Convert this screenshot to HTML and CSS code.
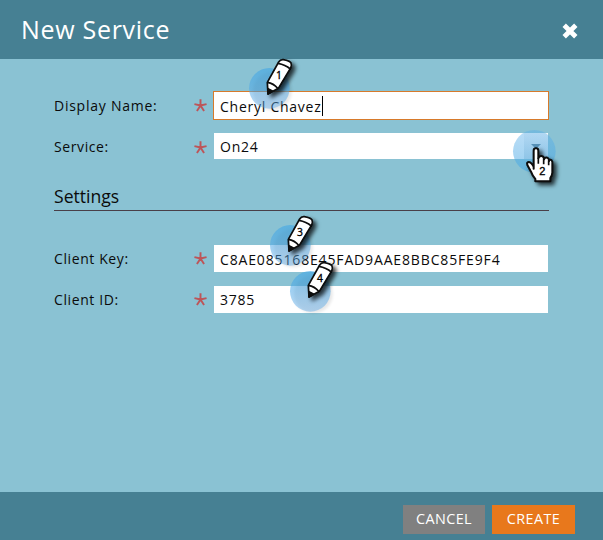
FILE: index.html
```html
<!DOCTYPE html>
<html lang="en">
<head>
<meta charset="utf-8">
<title>New Service</title>
<link rel="stylesheet" href="styles.css">
</head>
<body>
<svg class="defs" width="0" height="0">
  <defs>
    <linearGradient id="halo" x1="0" y1="0" x2="0" y2="1">
      <stop offset="0" stop-color="#45a8e4" stop-opacity=".65"/>
      <stop offset="1" stop-color="#5aa8e8" stop-opacity=".42"/>
    </linearGradient>
    <linearGradient id="halo-soft" x1="0" y1="0" x2="0" y2="1">
      <stop offset="0" stop-color="#5aaeea" stop-opacity=".42"/>
      <stop offset="1" stop-color="#45a8e4" stop-opacity=".55"/>
    </linearGradient>
    <filter id="shadow" x="-40%" y="-40%" width="200%" height="200%">
      <feDropShadow dx="10" dy="9" stdDeviation="6" flood-color="#000" flood-opacity=".75"/>
    </filter>
    <g id="pencil">
      <circle class="halo-shade" cx="97" cy="123" r="58"/>
      <circle cx="88" cy="115" r="61" fill="url(#halo)"/>
      <g filter="url(#shadow)" stroke="#0a0a0a" stroke-width="5" stroke-linejoin="round">
        <path d="M84 132 L82 97 L116 36 Q121 28 130 29 Q149 32 153 39 Q156 45 152 54 L115 115 Z" fill="#fff"/>
        <path d="M82 97 Q101 100 113 115 M114 40 Q136 44 151 57" fill="none"/>
        <path d="M84 116 L97 123 L84 132 Z" fill="#0a0a0a"/>
      </g>
    </g>
  </defs>
</svg>
<div class="dialog">
  <header class="header">
    <h1 class="title">New Service</h1>
    <svg class="close" width="18" height="18" viewBox="0 0 18 18"><path d="M3.2 3.2 L14.8 14.8 M14.8 3.2 L3.2 14.8"/></svg>
  </header>
  <main class="body">
    <div class="row row-name"><span class="label">Display Name:</span><span class="star"><svg width="13" height="13" viewBox="0 0 12 12"><path d="M6 6V.3M6 6L.4 4.7M6 6L11.6 4.7M6 6L2.7 11M6 6L9.3 11"/></svg></span><div class="field focused"><span class="value">Cheryl Chavez</span><i class="caret"></i></div></div>
    <div class="row row-service"><span class="label">Service:</span><span class="star"><svg width="13" height="13" viewBox="0 0 12 12"><path d="M6 6V.3M6 6L.4 4.7M6 6L11.6 4.7M6 6L2.7 11M6 6L9.3 11"/></svg></span><div class="field"><span class="value">On24</span><span class="trigger"><i class="arrow"></i></span></div></div>
    <h2 class="section">Settings</h2>
    <div class="row row-key"><span class="label">Client Key:</span><span class="star"><svg width="13" height="13" viewBox="0 0 12 12"><path d="M6 6V.3M6 6L.4 4.7M6 6L11.6 4.7M6 6L2.7 11M6 6L9.3 11"/></svg></span><div class="field"><span class="value key">C8AE085168E45FAD9AAE8BBC85FE9F4</span></div></div>
    <div class="row row-id"><span class="label">Client ID:</span><span class="star"><svg width="13" height="13" viewBox="0 0 12 12"><path d="M6 6V.3M6 6L.4 4.7M6 6L11.6 4.7M6 6L2.7 11M6 6L9.3 11"/></svg></span><div class="field"><span class="value">3785</span></div></div>
  </main>
  <footer class="footer">
    <button class="btn cancel"><span>CANCEL</span></button>
    <button class="btn create"><span>CREATE</span></button>
  </footer>

  <svg class="marker m1" viewBox="0 0 240 240"><use href="#pencil"/><text x="117" y="88">1</text></svg>
  <svg class="marker m2" viewBox="0 0 240 240">
    <circle cx="103" cy="124" r="64" fill="url(#halo-soft)"/>
    <g filter="url(#shadow)">
      <path d="M101 176 V122 Q101 115 108 115 Q115 115 115 122 V145 Q117 137 125 138 Q132 139 132 148 Q135 141 142 143 Q147 145 147 153 Q150 147 155 151 Q158 154 157 163 V188 Q156 199 151 204 V214 H106 V207 Q98 199 93 185 L82 165 Q79 157 86 156 Q93 156 101 170 Z" fill="#fff" stroke="#0a0a0a" stroke-width="6" stroke-linejoin="round"/>
      <path d="M115 143 V161 M131 147 V163 M146 152 V166" fill="none" stroke="#0a0a0a" stroke-width="5"/>
    </g>
    <text class="big" x="127" y="196">2</text>
  </svg>
  <svg class="marker m3" viewBox="0 0 240 240"><use href="#pencil"/><text x="117" y="88">3</text></svg>
  <svg class="marker m4" viewBox="0 0 240 240"><use href="#pencil"/><text x="117" y="88">4</text></svg>
</div>
</body>
</html>
```
FILE: styles.css
```css
* { box-sizing: border-box; }
body { margin: 0; font-family: "Open Sans", sans-serif; font-size: 14px; color: #0b0b0b; }
.defs { position: absolute; }
.dialog { position: relative; width: 603px; height: 540px; display: flex; flex-direction: column; overflow: hidden; background: #8ac2d3; }
.header { height: 59px; flex: none; display: flex; align-items: center; justify-content: space-between; padding: 0 24px 0 21px; background: #468093; }
.title { margin: -1px 0 0; font-size: 25px; line-height: 32px; font-weight: 400; letter-spacing: .7px; color: #fff; }
.close { margin-top: 3px; }
.close path { stroke: #fff; stroke-width: 4.8; fill: none; }
.body { flex: 1; padding: 32px 54px 0; }
.row { display: flex; align-items: center; height: 27px; }
.row-name { height: 29px; margin-bottom: 13px; }
.row-name .label { letter-spacing: .75px; }
.row-service { align-items: flex-start; height: 26px; line-height: 27px; }
.row-service .star { margin-top: 8px; }
.row-id { margin-top: 14px; }
.label { width: 140px; letter-spacing: .6px; white-space: nowrap; }
.star { width: 20px; height: 13px; display: flex; }
.star path { stroke: #bd5559; stroke-width: 1.8; fill: none; }
.field { width: 334px; height: 27px; flex: none; display: flex; align-items: center; padding-left: 6px; background: #fff; }
.focused { width: 336px; height: 29px; margin-left: -1px; border: 1px solid #d77a2b; }
.focused .value { padding-top: 1px; }
.row-service .field { height: 26px; }
.value { letter-spacing: .75px; white-space: nowrap; }
.key { letter-spacing: .85px; padding-top: 1px; }
.caret { width: 1px; height: 20px; background: #000; }
.trigger { margin-left: auto; width: 24px; height: 100%; display: flex; align-items: center; justify-content: center; background: linear-gradient(#f5f8fa, #d4e1e9); }
.arrow { border: 5px solid transparent; border-top-color: #58788c; border-bottom: 0; }
.section { width: 495px; height: 52px; margin: 0 0 34px; padding-top: 25px; font-size: 17.6px; line-height: 24px; font-weight: 400; border-bottom: 1px solid #493f48; }
.footer { height: 48px; flex: none; display: flex; justify-content: flex-end; gap: 7px; padding: 13px 28px 0 0; background: #468093; }
.btn { height: 29px; border: 0; padding: 0 0 2px; font: 14.4px "Open Sans", sans-serif; letter-spacing: .4px; color: #fff; }
.cancel { width: 82px; background: #808080; }
.create { width: 83px; background: #e8781c; }
.halo-shade { fill: #000; opacity: .09; filter: blur(4px); }
.marker { position: absolute; width: 80px; height: 80px; overflow: visible; pointer-events: none; }
.marker text { font: 31px "Open Sans", sans-serif; stroke: #000; stroke-width: 1; text-anchor: middle; fill: #000; }
.marker .big { font: 33px "Liberation Sans", sans-serif; }
.m1 { left: 240px; top: 50px; }
.m2 { left: 500px; top: 110px; }
.m3 { left: 261px; top: 207px; }
.m4 { left: 281px; top: 253px; }
```
